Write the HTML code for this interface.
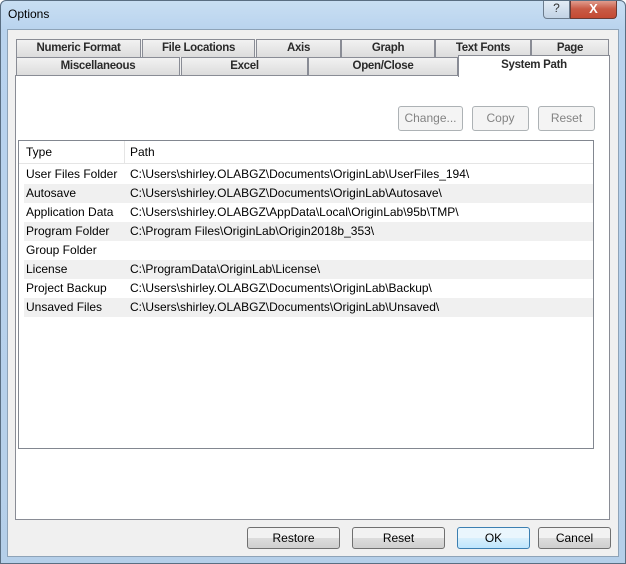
<!DOCTYPE html>
<html><head><meta charset="utf-8"><style>
*{margin:0;padding:0;box-sizing:border-box}
body{width:626px;height:564px;overflow:hidden;font-family:"Liberation Sans",sans-serif;font-size:12px;color:#000;background:#fff}
.win{position:absolute;left:0;top:0;width:626px;height:564px;border-radius:6px 6px 0 0;background:linear-gradient(#c9dff3,#b9d3ee 30px,#b5cfe9);}
.frame{position:absolute;left:0;top:0;width:626px;height:564px;border:1px solid #5a6e82;border-radius:6px 6px 0 0;pointer-events:none;z-index:5}
.title{position:absolute;left:8px;top:7px;font-size:12px}
.client{position:absolute;left:7px;top:29px;width:612px;height:528px;background:#f0f0f0;border:1px solid #8ea3b8}
.abs{position:absolute}
.tab{position:absolute;height:18px;border:1px solid #898c95;border-bottom:none;background:linear-gradient(#f2f2f2,#dcdcdc);text-align:center;line-height:17px;font-size:11.5px;font-weight:bold;color:#2a2a2a;letter-spacing:-0.3px}
.panel{position:absolute;left:15px;top:75px;width:595px;height:445px;background:#fff;border:1px solid #898c95}
.btn{position:absolute;height:22px;border:1px solid #707070;border-radius:3px;background:linear-gradient(#f2f2f2 50%,#dddddd 50%,#cfcfcf);text-align:center;line-height:20px;font-size:12px}
.dis{border-color:#adb2b5;background:#f4f4f4;color:#838383;height:25px;line-height:23px}
.table{position:absolute;left:18px;top:140px;width:576px;height:309px;border:1px solid #828790;background:#fff}
.row{position:absolute;left:5px;width:569px;height:19px;line-height:19px}
.row span{position:absolute;white-space:nowrap}
.g{background:#f0f0f0}
</style></head><body>
<div class="win">
<div class="title">Options</div>
<div class="abs" style="left:543px;top:0;width:27px;height:19px;border:1px solid #6b7b8c;border-top:none;border-radius:0 0 0 4px;background:linear-gradient(#e4edf6,#c2d3e5);text-align:center;font-size:12px;line-height:17px;color:#333">?</div>
<div class="abs" style="left:570px;top:0;width:47px;height:19px;border:1px solid #6b3a34;border-top:none;border-radius:0 0 4px 0;background:linear-gradient(#e4a597,#c85a45 50%,#c44a33);text-align:center;color:#fff;font-weight:bold;font-size:13px;line-height:17px">X</div>
<div class="client"></div>
<div class="tab" style="left:16px;top:39px;width:125px">Numeric Format</div>
<div class="tab" style="left:142px;top:39px;width:113px">File Locations</div>
<div class="tab" style="left:256px;top:39px;width:85px">Axis</div>
<div class="tab" style="left:341px;top:39px;width:94px">Graph</div>
<div class="tab" style="left:435px;top:39px;width:96px">Text Fonts</div>
<div class="tab" style="left:531px;top:39px;width:78px">Page</div>
<div class="tab" style="left:16px;top:57px;width:164px">Miscellaneous</div>
<div class="tab" style="left:181px;top:57px;width:127px">Excel</div>
<div class="tab" style="left:308px;top:57px;width:150px">Open/Close</div>
<div class="panel"></div>
<div class="tab" style="left:458px;top:55px;width:152px;height:22px;background:#fff;line-height:19px;z-index:2">System Path</div>
<div class="btn dis" style="left:398px;top:106px;width:65px">Change...</div>
<div class="btn dis" style="left:472px;top:106px;width:57px">Copy</div>
<div class="btn dis" style="left:538px;top:106px;width:57px">Reset</div>
<div class="table">
<div class="abs" style="left:0;top:0;width:574px;height:23px;border-bottom:1px solid #e5e5e5;line-height:23px">
<span class="abs" style="left:7px">Type</span><span class="abs" style="left:105px;top:0;width:1px;height:22px;background:#e5e5e5"></span><span class="abs" style="left:111px">Path</span></div>
<div class="row" style="top:24px"><span style="left:2px">User Files Folder</span><span style="left:106px">C:\Users\shirley.OLABGZ\Documents\OriginLab\UserFiles_194\</span></div>
<div class="row g" style="top:43px"><span style="left:2px">Autosave</span><span style="left:106px">C:\Users\shirley.OLABGZ\Documents\OriginLab\Autosave\</span></div>
<div class="row" style="top:62px"><span style="left:2px">Application Data</span><span style="left:106px">C:\Users\shirley.OLABGZ\AppData\Local\OriginLab\95b\TMP\</span></div>
<div class="row g" style="top:81px"><span style="left:2px">Program Folder</span><span style="left:106px">C:\Program Files\OriginLab\Origin2018b_353\</span></div>
<div class="row" style="top:100px"><span style="left:2px">Group Folder</span></div>
<div class="row g" style="top:119px"><span style="left:2px">License</span><span style="left:106px">C:\ProgramData\OriginLab\License\</span></div>
<div class="row" style="top:138px"><span style="left:2px">Project Backup</span><span style="left:106px">C:\Users\shirley.OLABGZ\Documents\OriginLab\Backup\</span></div>
<div class="row g" style="top:157px"><span style="left:2px">Unsaved Files</span><span style="left:106px">C:\Users\shirley.OLABGZ\Documents\OriginLab\Unsaved\</span></div>
</div>
<div class="btn" style="left:247px;top:527px;width:93px">Restore</div>
<div class="btn" style="left:352px;top:527px;width:93px">Reset</div>
<div class="btn" style="left:457px;top:527px;width:73px;border-color:#3c7fb1;background:linear-gradient(#eaf6fd 50%,#d9f0fc 50%,#bee6fd)">OK</div>
<div class="btn" style="left:538px;top:527px;width:73px">Cancel</div>
</div>
<div class="frame"></div>
</body></html>
